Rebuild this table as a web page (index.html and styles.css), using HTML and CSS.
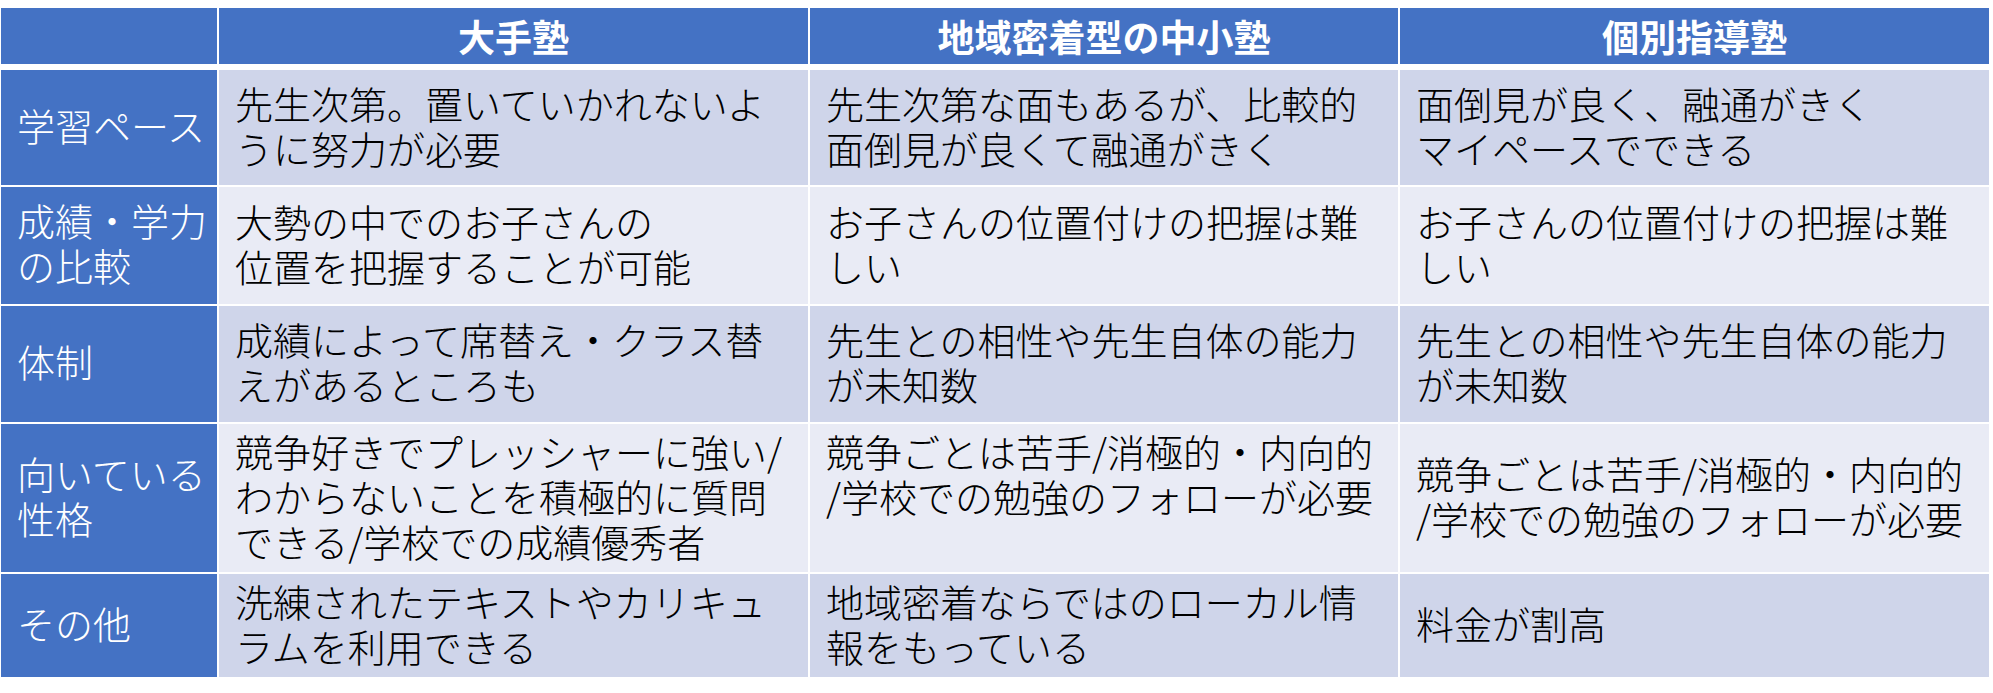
FILE: index.html
```html
<!DOCTYPE html>
<html lang="ja">
<head>
<meta charset="utf-8">
<title>塾の比較</title>
<link rel="stylesheet" href="styles.css">
</head>
<body>
<div class="compare">
  <div class="head head--corner"></div>
  <div class="head">大手塾</div>
  <div class="head">地域密着型の中小塾</div>
  <div class="head">個別指導塾</div>

  <div class="label">学習ペース</div>
  <div class="cell odd">先生次第。置いていかれないよ<br>うに努力が必要</div>
  <div class="cell odd">先生次第な面もあるが、比較的<br>面倒見が良くて融通がきく</div>
  <div class="cell odd">面倒見が良く、融通がきく<br>マイペースでできる</div>

  <div class="label">成績・学力<br>の比較</div>
  <div class="cell even">大勢の中でのお子さんの<br>位置を把握することが可能</div>
  <div class="cell even">お子さんの位置付けの把握は難<br>しい</div>
  <div class="cell even">お子さんの位置付けの把握は難<br>しい</div>

  <div class="label">体制</div>
  <div class="cell odd">成績によって席替え・クラス替<br>えがあるところも</div>
  <div class="cell odd">先生との相性や先生自体の能力<br>が未知数</div>
  <div class="cell odd">先生との相性や先生自体の能力<br>が未知数</div>

  <div class="label">向いている<br>性格</div>
  <div class="cell even">競争好きでプレッシャーに強い/<br>わからないことを積極的に質問<br>できる/学校での成績優秀者</div>
  <div class="cell even cell--top">競争ごとは苦手/消極的・内向的<br>/学校での勉強のフォローが必要</div>
  <div class="cell even">競争ごとは苦手/消極的・内向的<br>/学校での勉強のフォローが必要</div>

  <div class="label">その他</div>
  <div class="cell odd">洗練されたテキストやカリキュ<br>ラムを利用できる</div>
  <div class="cell odd">地域密着ならではのローカル情<br>報をもっている</div>
  <div class="cell odd">料金が割高</div>
</div>
</body>
</html>
```

FILE: styles.css
```css
html, body {
  margin: 0;
  padding: 0;
  background: #ffffff;
}

body {
  font-family: "Noto Sans CJK JP", "Noto Sans", sans-serif;
}

.compare {
  display: grid;
  grid-template-columns: 216px 589px 588px 589px;
  grid-template-rows: 60px 115px 117px 116px 148px 103px;
  gap: 2px;
  padding: 8px 0 0 1px;
  width: max-content;
}

.head {
  height: 56px;
  background: #4472c4;
  color: #ffffff;
  font-weight: 700;
  font-size: 37px;
  line-height: 56px;
  text-align: center;
  white-space: nowrap;
}

.label {
  background: #4472c4;
  color: #ffffff;
  font-size: 38px;
  font-weight: 300;
  line-height: 45px;
  padding: 0 0 7px 16px;
  display: flex;
  align-items: center;
  white-space: nowrap;
}

.cell {
  color: #000000;
  font-size: 38px;
  font-weight: 300;
  line-height: 45px;
  padding: 0 0 6px 16px;
  display: flex;
  align-items: center;
  white-space: nowrap;
}

.cell--top {
  align-items: flex-start;
  padding-top: 4px;
}

.odd {
  background: #cfd5ea;
}

.even {
  background: #e9ebf5;
}
```
